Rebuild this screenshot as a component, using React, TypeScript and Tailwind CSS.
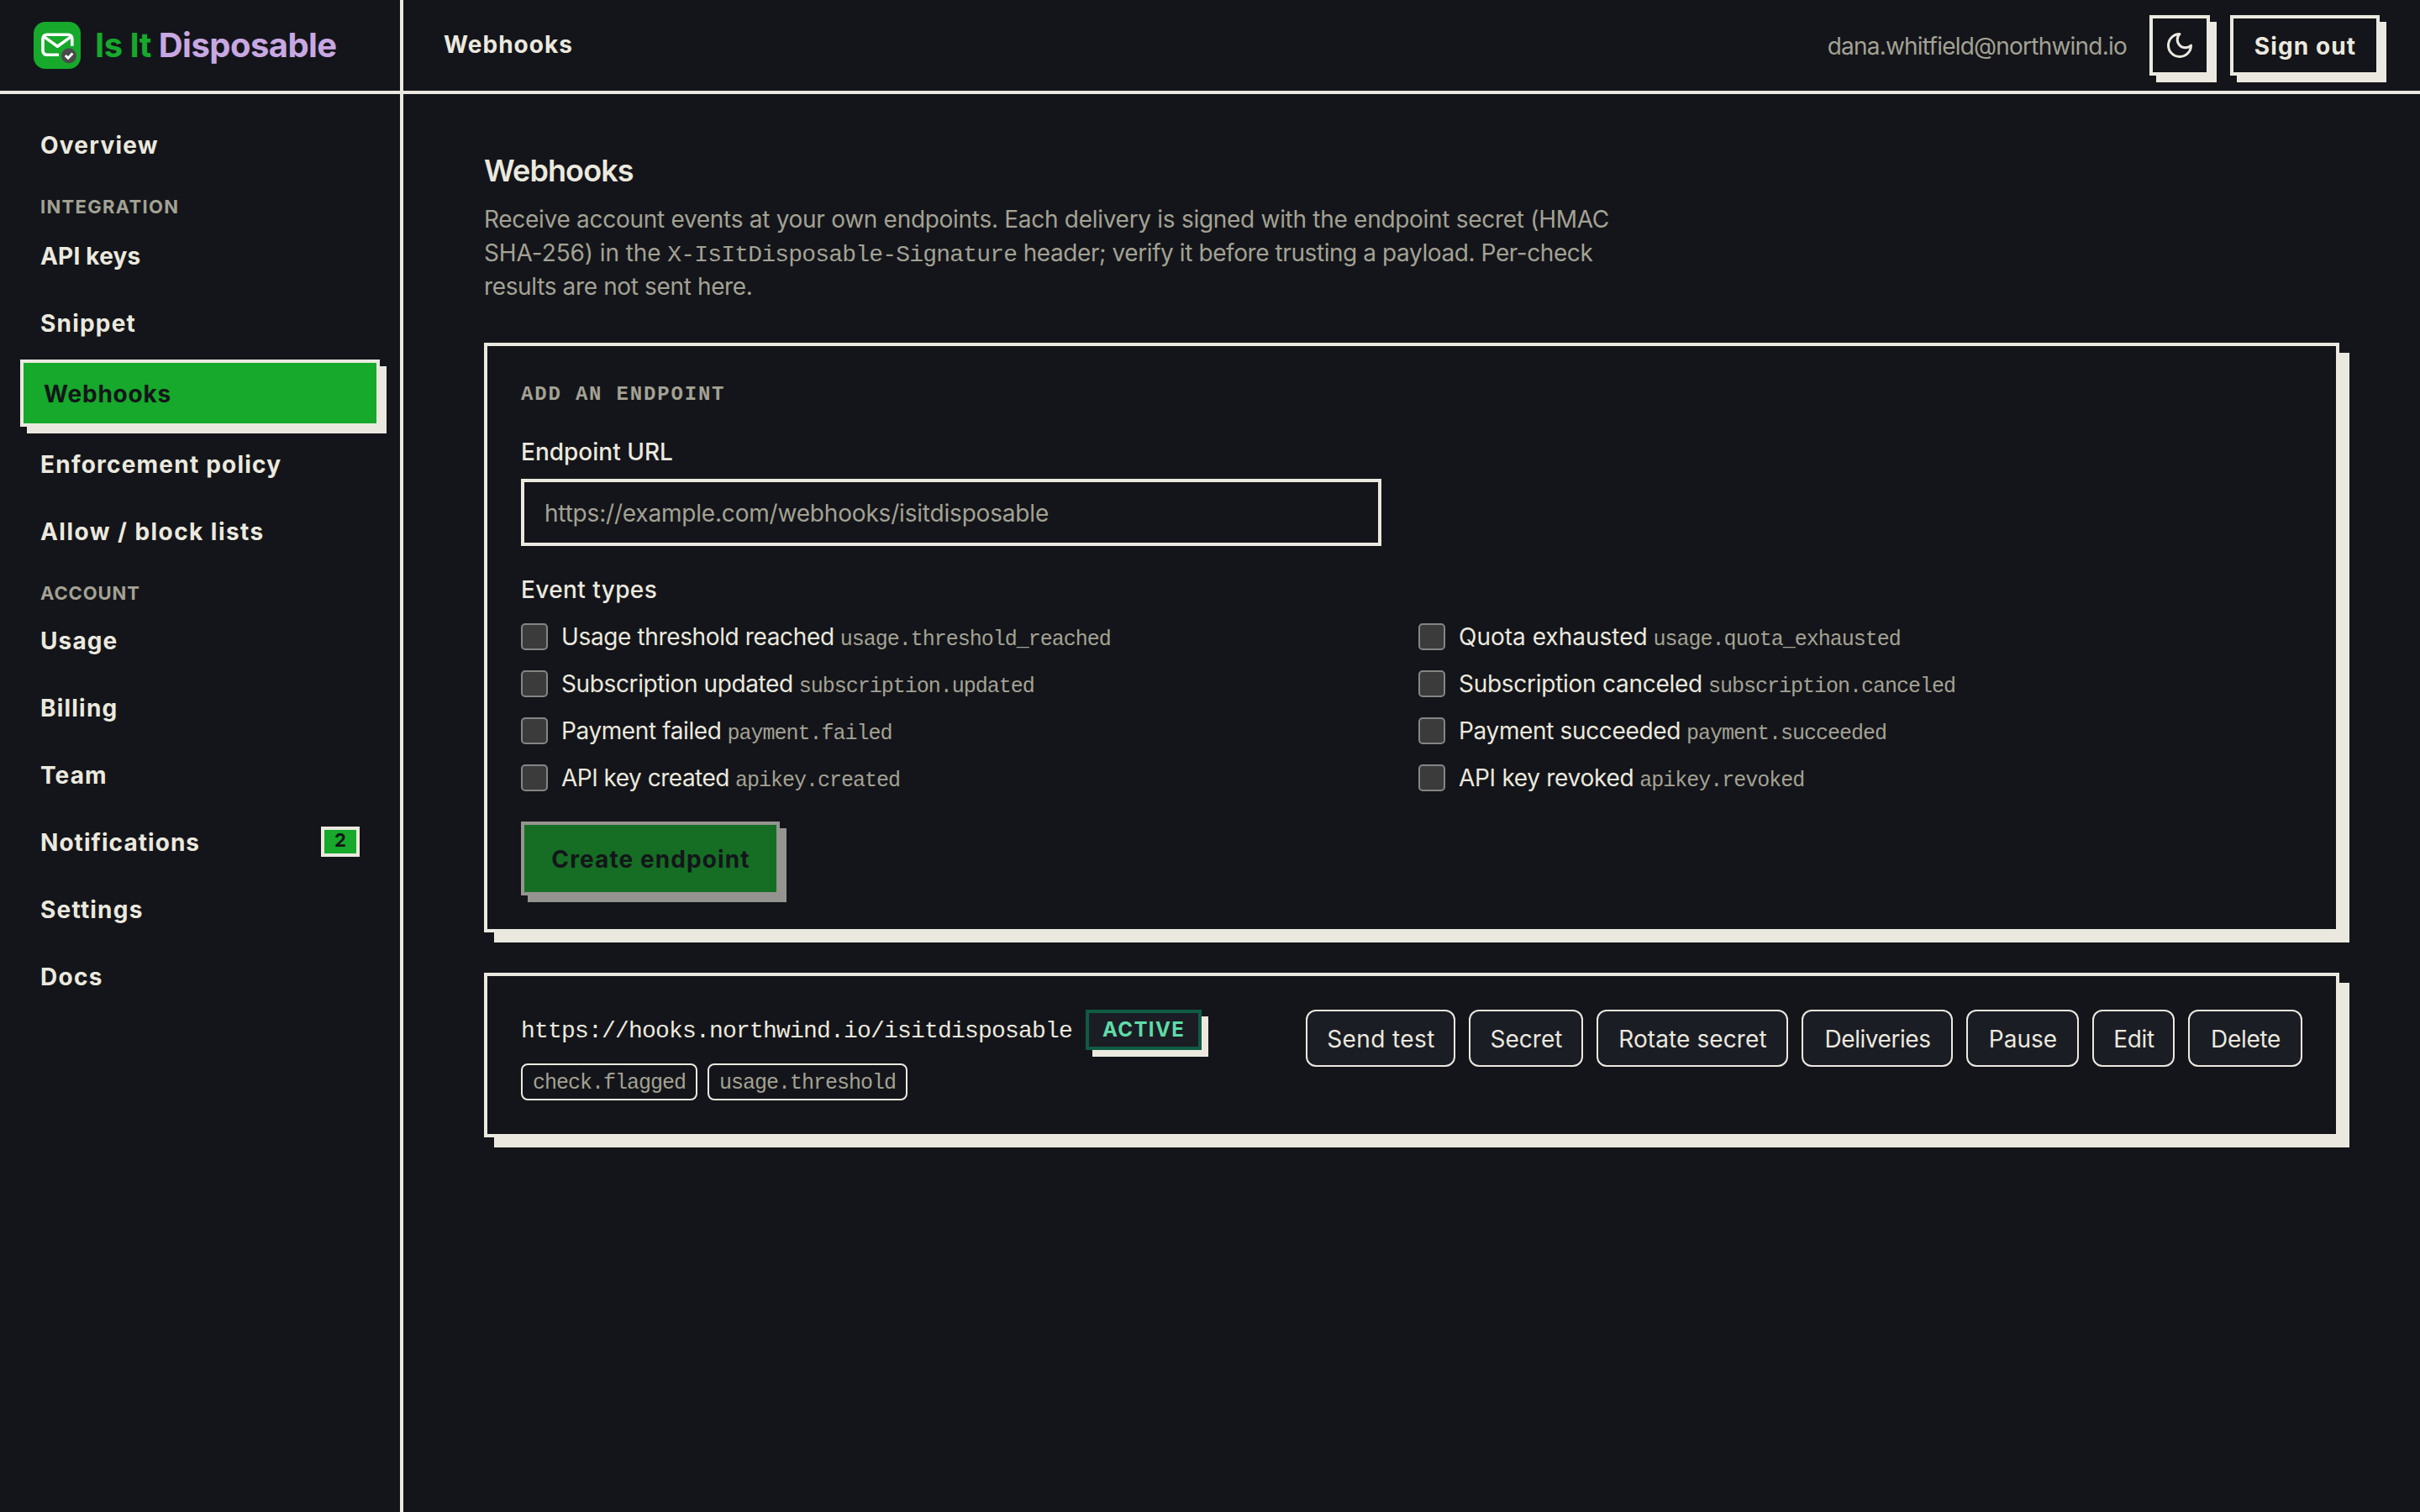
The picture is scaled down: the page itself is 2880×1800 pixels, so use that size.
import clsx from "clsx";

const MONO = "font-['Liberation_Mono',monospace]";

type NavItem = { label: string; track: string; active?: boolean; badge?: number };

const MAIN_NAV: NavItem[] = [{ label: "Overview", track: "tracking-[1.25px]" }];

const INTEGRATION_NAV: NavItem[] = [
  { label: "API keys", track: "tracking-[0.2px]" },
  { label: "Snippet", track: "tracking-[1.2px]" },
  { label: "Webhooks", track: "tracking-[0.8px]", active: true },
  { label: "Enforcement policy", track: "tracking-[1.22px]" },
  { label: "Allow / block lists", track: "tracking-[1.45px]" },
];

const ACCOUNT_NAV: NavItem[] = [
  { label: "Usage", track: "tracking-[1.1px]" },
  { label: "Billing", track: "tracking-[1.2px]" },
  { label: "Team", track: "tracking-[1.1px]" },
  { label: "Notifications", track: "tracking-[1.05px]", badge: 2 },
  { label: "Settings", track: "tracking-[1.2px]" },
  { label: "Docs", track: "tracking-[1.3px]" },
];

const EVENTS = [
  { label: "Usage threshold reached", code: "usage.threshold_reached", track: "tracking-[-0.37px]" },
  { label: "Quota exhausted", code: "usage.quota_exhausted", track: "tracking-[0px]" },
  { label: "Subscription updated", code: "subscription.updated", track: "tracking-[-0.38px]" },
  { label: "Subscription canceled", code: "subscription.canceled", track: "tracking-[-0.27px]" },
  { label: "Payment failed", code: "payment.failed", track: "tracking-[-0.4px]" },
  { label: "Payment succeeded", code: "payment.succeeded", track: "tracking-[-0.35px]" },
  { label: "API key created", code: "apikey.created", track: "tracking-[-0.5px]" },
  { label: "API key revoked", code: "apikey.revoked", track: "tracking-[-0.3px]" },
];

const ACTIONS = [
  { label: "Send test", cls: "w-[178px] tracking-[0.4px]" },
  { label: "Secret", cls: "w-[136px] tracking-[0px]" },
  { label: "Rotate secret", cls: "w-[228px] tracking-[0.1px]" },
  { label: "Deliveries", cls: "w-[180px] tracking-[-0.45px]" },
  { label: "Pause", cls: "w-[134px]" },
  { label: "Edit", cls: "w-[98px] tracking-[-0.4px]" },
  { label: "Delete", cls: "w-[136px] tracking-[-0.3px]" },
];

function Logo() {
  return (
    <svg width="56" height="56" viewBox="0 0 56 56" fill="none" className="shrink-0">
      <rect width="56" height="56" rx="14" fill="#16a92b" />
      <g stroke="#fff" strokeWidth="3.6" strokeLinecap="butt" strokeLinejoin="round">
        <path d="M30 39.2H15.6A4.6 4.6 0 0 1 11 34.6V19.8A4.6 4.6 0 0 1 15.6 15.2H41.2A4.6 4.6 0 0 1 45.8 19.8V28.8" />
        <path d="M12.2 17.6 28.4 29.2 44.6 17.6" />
      </g>
      <circle cx="42" cy="40.3" r="9" fill="#4a4a4c" />
      <path d="m37.8 40 3.2 3.2 5.4-5.8" stroke="#fff" strokeWidth="3" />
    </svg>
  );
}

function NavLink({ item }: { item: NavItem }) {
  return (
    <a
      className={clsx(
        "flex items-center justify-between pt-0.5 text-[28px] leading-[40px] font-bold",
        item.track,
        item.active
          ? "h-20 border-4 border-[#ebe9df] bg-[#16a92b] px-6 text-[#14151a] shadow-[8px_8px_0_#ebe9df]"
          : "h-[72px] px-6",
      )}
    >
      {item.label}
      {item.badge && (
        <span className="mb-0.5 flex h-9 w-[46px] justify-center border-4 border-[#ebe9df] bg-[#16a92b] text-[22px] leading-6 tracking-normal text-[#14151a]">
          {item.badge}
        </span>
      )}
    </a>
  );
}

function Sidebar() {
  return (
    <aside className="w-[480px] shrink-0 border-r-4 border-[#ebe9df]">
      <div className="flex h-28 items-center gap-[17px] border-b-4 border-[#ebe9df] px-10">
        <Logo />
        <span className="text-[40px] leading-none font-bold tracking-[-0.55px] whitespace-nowrap text-[#16a92b]">
          Is It <span className="text-[#c8a8e2]">Disposable</span>
        </span>
      </div>
      <nav className="flex flex-col px-6 pt-6">
        {MAIN_NAV.map((i) => (
          <NavLink key={i.label} item={i} />
        ))}
        <div className="mt-4 h-11 px-6 text-[22px] leading-[45px] font-bold tracking-[1.3px] text-[#a3a294]">
          INTEGRATION
        </div>
        <div className="flex flex-col gap-2">
          {INTEGRATION_NAV.map((i) => (
            <NavLink key={i.label} item={i} />
          ))}
        </div>
        <div className="mt-4 h-[42px] px-6 text-[22px] leading-[44px] font-bold tracking-[0.9px] text-[#a3a294]">
          ACCOUNT
        </div>
        <div className="flex flex-col gap-2">
          {ACCOUNT_NAV.map((i) => (
            <NavLink key={i.label} item={i} />
          ))}
        </div>
      </nav>
    </aside>
  );
}

function Topbar() {
  return (
    <header className="flex h-28 items-center justify-between border-b-4 border-[#ebe9df] px-12">
      <div className="pb-0.5 text-[28px] font-bold tracking-[1.05px]">Webhooks</div>
      <div className="flex items-center gap-6">
        <span className="mr-[3px] pt-px text-[28px] tracking-[-0.78px] text-[#a3a294]">dana.whitfield@northwind.io</span>
        <button className="grid size-[72px] place-items-center border-4 border-[#ebe9df] shadow-[8px_8px_0_#ebe9df]">
          <svg width="36" height="36" viewBox="0 0 24 24" fill="none" stroke="currentColor" strokeWidth="2" strokeLinecap="round" strokeLinejoin="round">
            <path d="M12 3a6 6 0 0 0 9 9 9 9 0 1 1-9-9Z" />
          </svg>
        </button>
        <button className="h-[72px] w-[178px] border-4 border-[#ebe9df] pt-0.5 pl-px text-[28px] font-bold tracking-[1.1px] shadow-[8px_8px_0_#ebe9df]">
          Sign out
        </button>
      </div>
    </header>
  );
}

function AddEndpoint() {
  return (
    <section className="mt-[47px] border-4 border-[#ebe9df] bg-[#14151a] p-10 shadow-[12px_12px_0_#ebe9df]">
      <h2 className={clsx(MONO, "h-8 pt-0.5 text-2xl font-bold tracking-[1.82px] text-[#a3a294]")}>ADD AN ENDPOINT</h2>
      <label className="mt-[34px] block text-[28px] leading-[41px] font-medium tracking-[0px]">Endpoint URL</label>
      <div className="mt-[11px] flex h-20 w-[1024px] items-center border-4 border-[#ebe9df] px-6 pt-px text-[28px] tracking-[-0.19px] text-[#a3a294]">
        https://example.com/webhooks/isitdisposable
      </div>
      <div className="mt-8 text-[28px] leading-[41px] font-medium tracking-[0.4px]">Event types</div>
      <div className="mt-[15px] grid grid-cols-2 gap-4">
        {EVENTS.map((e) => (
          <label key={e.code} className="flex h-10 items-center gap-4">
            <span className="size-8 rounded-[5px] border-2 border-[#858585] bg-[#3b3b3b]" />
            <span className="flex items-baseline gap-[7px] pt-[3px] text-[28px] leading-[40px]">
              <span className={e.track}>{e.label}</span>
              <span className={clsx(MONO, "text-[25px] tracking-[-1px] text-[#a3a294]")}>{e.code}</span>
            </span>
          </label>
        ))}
      </div>
      <button className="mt-8 block h-[88px] w-[308px] border-4 border-[#ebe9df] bg-[#16a92b] pt-0.5 pl-px text-[28px] font-bold tracking-[1.1px] text-[#14151a] opacity-60 shadow-[8px_8px_0_#ebe9df]">
        Create endpoint
      </button>
    </section>
  );
}

function EndpointCard() {
  return (
    <section className="mt-12 flex items-start justify-between border-4 border-[#ebe9df] bg-[#14151a] p-10 shadow-[12px_12px_0_#ebe9df]">
      <div>
        <div className="flex h-12 items-center gap-4">
          <span className={clsx(MONO, "pt-[3px] text-[28px] tracking-[-0.8px]")}>https://hooks.northwind.io/isitdisposable</span>
          <span className="h-12 w-[138px] border-4 border-[#0f5b44] bg-[#1b1d25] text-center text-2xl leading-[40px] font-bold tracking-[1.4px] text-[#5fdca8] shadow-[8px_8px_0_#ebe9df]">
            ACTIVE
          </span>
        </div>
        <div className="mt-4 flex gap-3">
          {["check.flagged", "usage.threshold"].map((t) => (
            <span
              key={t}
              className={clsx(MONO, "h-11 rounded-lg border-2 border-[#ebe9df] px-3 text-[25px] leading-[43px] tracking-[-1px] text-[#a3a294]")}
            >
              {t}
            </span>
          ))}
        </div>
      </div>
      <div className="flex gap-4">
        {ACTIONS.map((a) => (
          <button key={a.label} className={clsx("h-[68px] rounded-xl border-2 border-[#ebe9df] bg-[#1b1d25] pt-0.5 pl-px text-[28px]", a.cls)}>
            {a.label}
          </button>
        ))}
      </div>
    </section>
  );
}

export default function App() {
  return (
    <div className="flex h-[1800px] w-[2880px] overflow-hidden bg-[#14151a] font-['Inter',sans-serif] text-[#ebe9df]">
      <Sidebar />
      <div className="flex-1">
        <Topbar />
        <main className="px-24 pt-16">
          <h1 className="text-4xl leading-[54px] font-semibold tracking-[-0.9px]">Webhooks</h1>
          <p className="mt-[11px] text-[28px] leading-[40px] whitespace-nowrap text-[#a3a294]">
            <span className="block h-10 tracking-[-0.29px]">
              Receive account events at your own endpoints. Each delivery is signed with the endpoint secret (HMAC
            </span>
            <span className="block h-10 tracking-[-0.42px]">
              <span className="tracking-[-0.1px]">SHA-256) in the </span>
              <code className={clsx(MONO, "text-[28px] tracking-[-0.8px]")}>X-IsItDisposable-Signature</code> header; verify it
              before trusting a payload. Per-check
            </span>
            <span className="block h-10 tracking-[-0.36px]">results are not sent here.</span>
          </p>
          <AddEndpoint />
          <EndpointCard />
        </main>
      </div>
    </div>
  );
}
